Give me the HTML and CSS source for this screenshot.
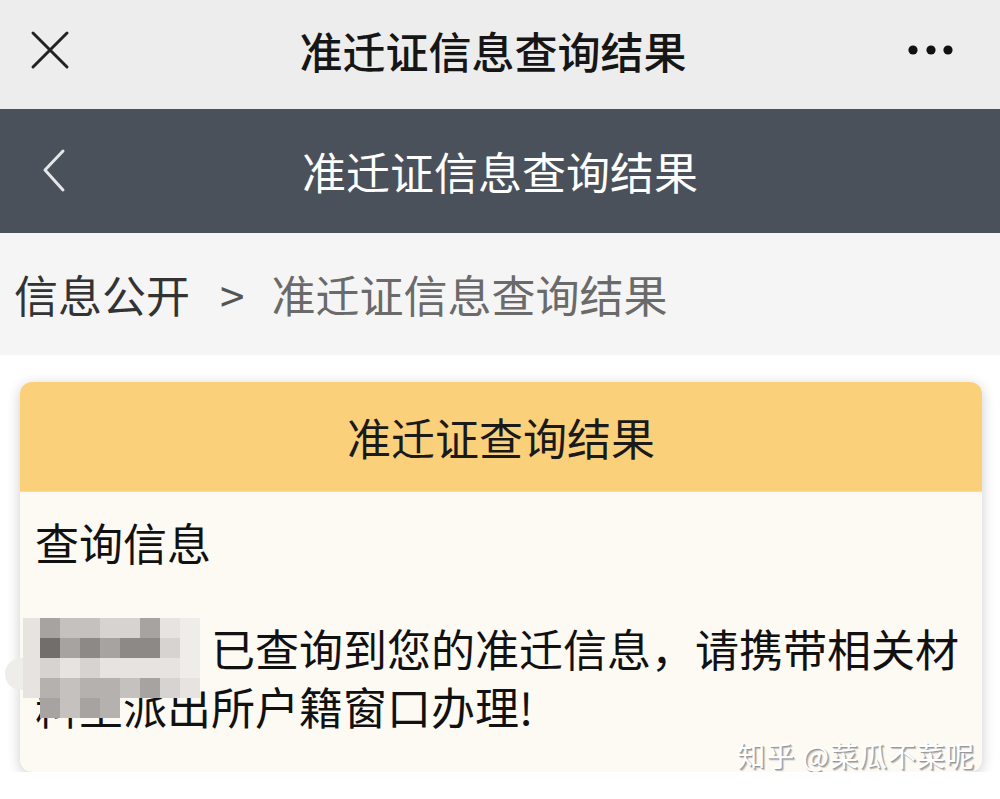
FILE: index.html
```html
<!DOCTYPE html>
<html lang="zh-CN">
<head>
    <meta charset="UTF-8">
    <title>准迁证信息查询结果</title>
    <link rel="stylesheet" href="styles.css">
</head>
<body>
    <header class="topbar">
        <svg class="ico_close" width="40" height="40" viewBox="0 0 40 40">
            <path d="M3 3L37 37M37 3L3 37" stroke="#222" stroke-width="3" stroke-linecap="round" fill="none"/>
        </svg>
        <h1>准迁证信息查询结果</h1>
        <svg class="ico_more" width="50" height="12" viewBox="0 0 50 12">
            <circle cx="7" cy="6" r="4.6" fill="#111"/>
            <circle cx="25" cy="6" r="4.6" fill="#111"/>
            <circle cx="42" cy="6" r="4.6" fill="#111"/>
        </svg>
    </header>

    <nav class="navbar">
        <svg class="ico_back" width="30" height="46" viewBox="0 0 30 46">
            <path d="M22 3L4 22L22 42" stroke="#e4e6e9" stroke-width="3" stroke-linecap="round" stroke-linejoin="round" fill="none"/>
        </svg>
        <h2>准迁证信息查询结果</h2>
    </nav>

    <div class="crumb">
        <span>信息公开</span>
        <span class="sep">&gt;</span>
        <span class="cur">准迁证信息查询结果</span>
    </div>

    <main class="content">
        <section class="card">
            <div class="card_head">准迁证查询结果</div>
            <div class="card_body">
                <p class="label">查询信息</p>
                <p class="msg"><span class="name"><span class="mosaic_pill"></span><span class="mosaic">
                    <i class="c1"></i><i class="c5"></i><i class="c3"></i><i class="c3"></i><i class="c2"></i><i class="c2"></i><i class="c5"></i><i class="c1"></i><i class="c0"></i>
                    <i class="c1"></i><i class="c8"></i><i class="c5"></i><i class="c6"></i><i class="c5"></i><i class="c6"></i><i class="c6"></i><i class="c2"></i><i class="c0"></i>
                    <i class="c1"></i><i class="c2"></i><i class="c1"></i><i class="c2"></i><i class="c1"></i><i class="c1"></i><i class="c1"></i><i class="c1"></i><i class="c0"></i>
                    <i class="c1"></i><i class="c4"></i><i class="c3"></i><i class="c4"></i><i class="c4"></i><i class="c3"></i><i class="c5"></i><i class="c2"></i><i class="c1"></i>
                    <i class="cx"></i><i class="c5"></i><i class="c3"></i><i class="c5"></i><i class="c4"></i><i class="cx"></i><i class="cx"></i><i class="cx"></i><i class="cx"></i>
                </span></span>已查询到您的准迁信息，请携带相关材料至派出所户籍窗口办理!</p>
            </div>
        </section>
        <div class="watermark">知乎 @菜瓜不菜呢</div>
    </main>
</body>
</html>
```

FILE: styles.css
```css
*{padding:0;margin:0;box-sizing:border-box;}
body{width:1000px;background:#fff;font-family:"Noto Sans CJK SC","Noto Sans",sans-serif;color:#111;}

/* 상단 바 */
.topbar{height:109px;background:#ededed;display:flex;align-items:center;padding:0 44px 9px 30px;}
.topbar h1{flex:1;text-align:center;font-size:43px;font-weight:500;color:#161616;margin-left:10px;}
.ico_close{display:block;}

/* 다크 네비 */
.navbar{height:124px;background:#4a515b;display:flex;align-items:center;padding:0 0 0 41px;}
.navbar h2{flex:1;text-align:center;font-size:44px;font-weight:400;color:#fff;margin-left:-41px;margin-right:30px;}
.ico_back{display:block;}

/* 브레드크럼 */
.crumb{height:122px;background:#f5f5f5;display:flex;align-items:center;padding-left:14px;font-size:44px;color:#333;}
.crumb .sep{margin:0 27px 0 30px;color:#555;}
.crumb .cur{color:#6a6a6a;}

.content{position:relative;padding:27px 18px 0 20px;}

.card{background:#fdf9f3;border-radius:12px;box-shadow:0 3px 14px rgba(0,0,0,.2);}
.card_head{height:110px;display:flex;align-items:center;justify-content:center;background:#fbd07b;border-radius:12px 12px 0 0;font-size:44px;color:#1a1a1a;border-bottom:1px solid #f6dca4;}
.card_body{padding:21px 15px 37px;font-size:44px;line-height:58px;}
.label{margin-bottom:48px;}
.msg{color:#111;}

/* 이름 모자이크 */
.name{position:relative;display:inline-block;width:176px;height:58px;vertical-align:top;}
.mosaic{position:absolute;left:-12px;top:-1px;display:grid;grid-template-columns:17px repeat(8,20px);grid-auto-rows:20px;width:177px;}
.mosaic i{display:block;}
.mosaic_pill{position:absolute;left:-30px;top:39px;width:195px;height:32px;border-radius:16px;background:#efedea;}
.c0{background:#efede9;}
.c1{background:#e6e3e0;}
.c2{background:#d6d3d0;}
.c3{background:#c4c1be;}
.c4{background:#b4b1ae;}
.c5{background:#a6a3a0;}
.c6{background:#8c8986;}
.c8{background:#716e6b;}
.cx{background:transparent;}

/* 워터마크 */
.watermark{position:absolute;right:25px;top:384px;font-size:28px;line-height:32px;color:#fff;text-shadow:1px 1px 0 #999,2px 2px 1px #bbb;letter-spacing:1px;}
```
